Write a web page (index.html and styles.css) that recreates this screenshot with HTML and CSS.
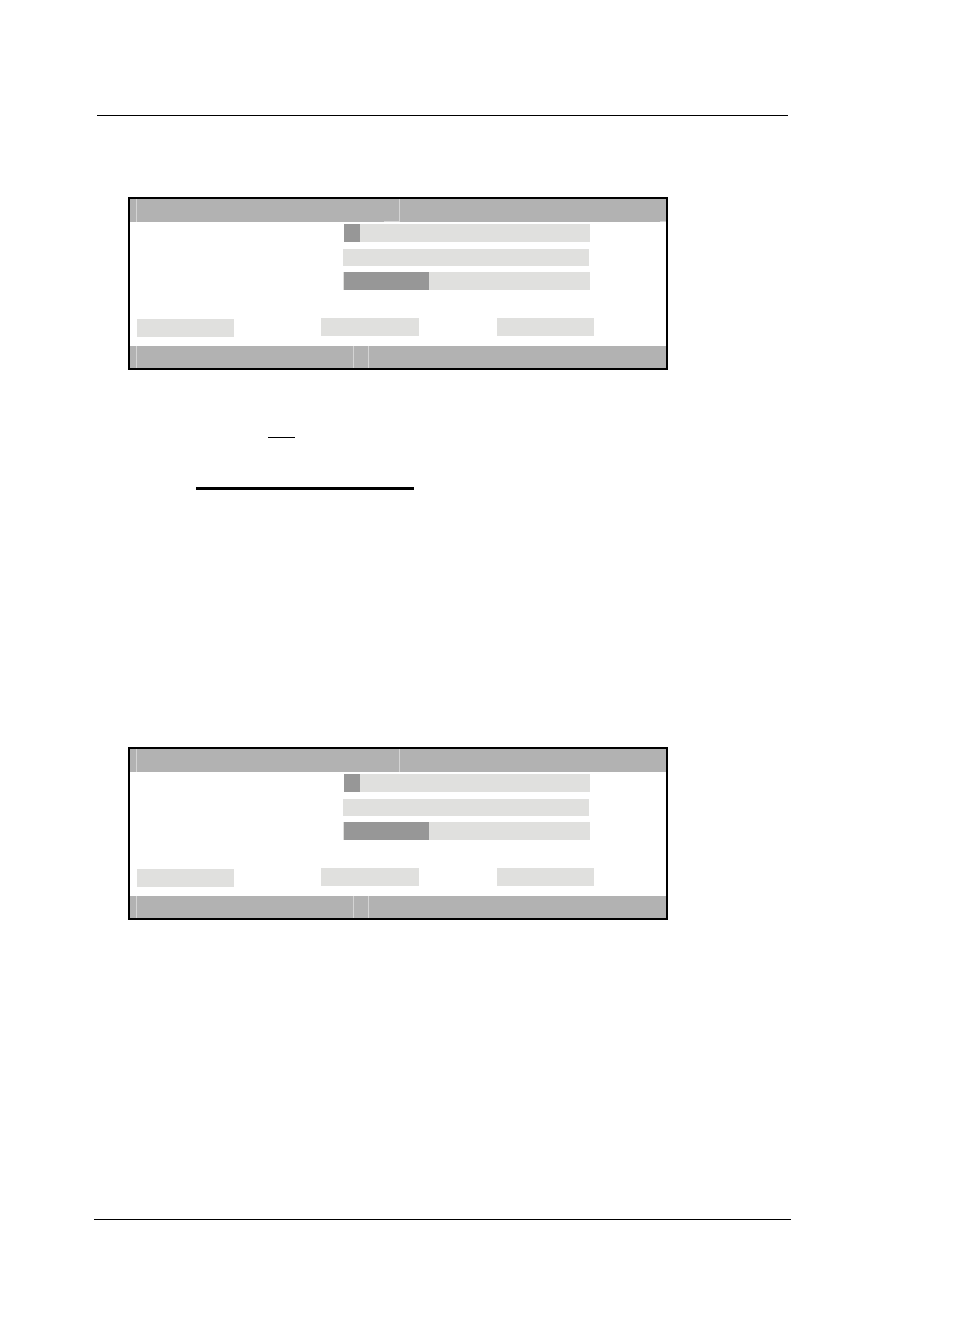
FILE: index.html
```html
<!DOCTYPE html>
<html lang="en">
<head>
<meta charset="utf-8">
<title>Panel layout</title>
<link rel="stylesheet" href="styles.css">
</head>
<body>
<div class="page">
  <div class="rule rule-top"></div>

  <section class="panel panel-first">
    <div class="bar bar-head">
      <span class="cell cell-edge"></span>
      <span class="cell cell-title"></span>
      <span class="cell cell-fill"></span>
    </div>
    <div class="panel-body">
      <div class="fields">
        <div class="field field-a"><span class="knob knob-small"></span></div>
        <div class="field field-b"></div>
        <div class="field field-c"><span class="knob knob-wide"></span></div>
      </div>
      <div class="buttons">
        <span class="btn btn-one"></span>
        <span class="btn btn-two"></span>
        <span class="btn btn-three"></span>
      </div>
    </div>
    <div class="bar bar-foot">
      <span class="cell cell-edge"></span>
      <span class="cell cell-status"></span>
      <span class="cell cell-gap"></span>
      <span class="cell cell-fill"></span>
    </div>
  </section>

  <div class="mark mark-short"></div>
  <div class="mark mark-long"></div>

  <section class="panel panel-second">
    <div class="bar bar-head">
      <span class="cell cell-edge"></span>
      <span class="cell cell-title"></span>
      <span class="cell cell-fill"></span>
    </div>
    <div class="panel-body">
      <div class="fields">
        <div class="field field-a"><span class="knob knob-small"></span></div>
        <div class="field field-b"></div>
        <div class="field field-c"><span class="knob knob-wide"></span></div>
      </div>
      <div class="buttons">
        <span class="btn btn-one"></span>
        <span class="btn btn-two"></span>
        <span class="btn btn-three"></span>
      </div>
    </div>
    <div class="bar bar-foot">
      <span class="cell cell-edge"></span>
      <span class="cell cell-status"></span>
      <span class="cell cell-gap"></span>
      <span class="cell cell-fill"></span>
    </div>
  </section>

  <div class="rule rule-bottom"></div>
</div>
</body>
</html>
```

FILE: styles.css
```css
* {
  box-sizing: border-box;
}

html, body {
  margin: 0;
  padding: 0;
  background: #ffffff;
}

body {
  font-family: "Liberation Sans", Arial, sans-serif;
}

.page {
  width: 953px;
  height: 1337px;
  display: flex;
  flex-direction: column;
  align-items: flex-start;
}

/* page rules */
.rule {
  height: 1px;
  background: #000;
}

.rule-top {
  margin-top: 115px;
  margin-left: 97px;
  width: 691px;
}

.rule-bottom {
  margin-top: 299px;
  margin-left: 94px;
  width: 697px;
}

/* dialog panels */
.panel {
  margin-left: 128px;
  width: 540px;
  height: 173px;
  border: 2px solid #000;
  display: flex;
  flex-direction: column;
  background: #fff;
}

.panel-first {
  margin-top: 81px;
}

.panel-second {
  margin-top: 257px;
}

.bar {
  height: 23px;
  background: #b2b2b2;
  display: flex;
  flex: none;
}

.bar-foot {
  height: 22px;
}

.cell {
  display: block;
  height: 100%;
}

.cell + .cell {
  border-left: 1px solid #d4d4d4;
}

.cell-edge {
  width: 6px;
}

.bar-head .cell-title {
  width: 263px;
}

.bar-foot .cell-status {
  width: 217px;
}

.bar-foot .cell-gap {
  width: 15px;
}

.cell-fill {
  flex: 1;
}

/* faint leftover highlight along the lower edge of the first title bar */
.panel-first .bar-head .cell-title {
  background: linear-gradient(#d4d4d4, #d4d4d4) right 0 bottom 0 / 15px 1px no-repeat;
}

.panel-first .bar-head .cell-fill {
  background: linear-gradient(#d4d4d4, #d4d4d4) right 0 bottom 0 / 6px 1px no-repeat;
}

.panel-body {
  flex: 1;
  display: flex;
  flex-direction: column;
}

/* input rows */
.fields {
  margin-top: 2px;
  padding-left: 213px;
  display: flex;
  flex-direction: column;
  align-items: flex-start;
}

.field {
  background: #e0e0de;
  display: flex;
}

.field-a {
  margin-left: 1px;
  width: 246px;
  height: 18px;
}

.field-b {
  margin-top: 7px;
  width: 246px;
  height: 17px;
}

.field-c {
  margin-top: 6px;
  width: 247px;
  height: 18px;
  padding-left: 1px;
}

.knob {
  display: block;
  height: 100%;
  background: #979797;
}

.knob-small {
  width: 16px;
}

.knob-wide {
  width: 85px;
}

/* button row */
.buttons {
  margin-top: 28px;
  display: flex;
  align-items: flex-start;
  padding-left: 7px;
}

.btn {
  display: block;
  height: 18px;
  background: #e0e0de;
}

.btn-one {
  width: 97px;
  margin-top: 1px;
}

.btn-two {
  width: 98px;
  margin-left: 87px;
}

.btn-three {
  width: 97px;
  margin-left: 78px;
}

/* stray marks between panels */
.mark {
  background: #000;
}

.mark-short {
  margin-top: 67px;
  margin-left: 268px;
  width: 27px;
  height: 1px;
}

.mark-long {
  margin-top: 49px;
  margin-left: 196px;
  width: 218px;
  height: 3px;
}
```
